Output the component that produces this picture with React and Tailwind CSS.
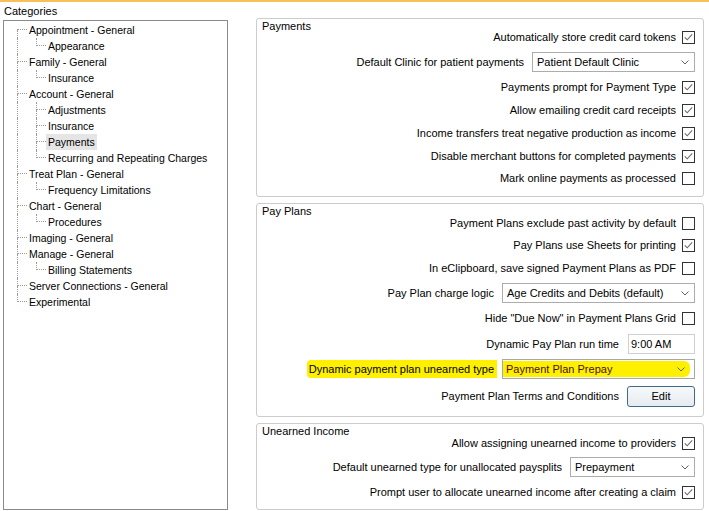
import React from "react";

const tree = [
  { label: "Appointment - General", level: 0 },
  { label: "Appearance", level: 1, last: true },
  { label: "Family - General", level: 0 },
  { label: "Insurance", level: 1, last: true },
  { label: "Account - General", level: 0 },
  { label: "Adjustments", level: 1 },
  { label: "Insurance", level: 1 },
  { label: "Payments", level: 1, selected: true },
  { label: "Recurring and Repeating Charges", level: 1, last: true },
  { label: "Treat Plan - General", level: 0 },
  { label: "Frequency Limitations", level: 1, last: true },
  { label: "Chart - General", level: 0 },
  { label: "Procedures", level: 1, last: true },
  { label: "Imaging - General", level: 0 },
  { label: "Manage - General", level: 0 },
  { label: "Billing Statements", level: 1, last: true },
  { label: "Server Connections - General", level: 0 },
  { label: "Experimental", level: 0 },
];

function Connector({ up, down }) {
  return (
    <div className="w-[10px] shrink-0 flex flex-col">
      <div
        className={`h-[8px] w-[10px] border-b border-dotted border-[#9a9a9a] ${up ? "border-l" : ""}`}
      />
      <div className={`h-[8px] border-dotted border-[#9a9a9a] ${down ? "border-l" : ""}`} />
    </div>
  );
}

function TreeRow({ item, first, lastTop }) {
  return (
    <div className="flex h-[16px] items-stretch">
      <div className="w-[13px] shrink-0" />
      {item.level === 0 ? (
        <>
          <Connector up={!first} down={!lastTop} />
          <div className="w-[2px] shrink-0" />
        </>
      ) : (
        <>
          <div className="w-[19px] shrink-0 border-l border-dotted border-[#9a9a9a]" />
          <Connector up down={!item.last} />
        </>
      )}
      <span
        className={`px-[2px] leading-[16px] whitespace-nowrap ${item.selected ? "bg-[#e5e5e5]" : ""} ${item.level === 0 ? "-ml-[2px]" : ""}`}
      >
        {item.label}
      </span>
    </div>
  );
}

function Check({ checked }) {
  return (
    <svg width="13" height="13" viewBox="0 0 13 13" className="shrink-0">
      <rect x="0.5" y="0.5" width="12" height="12" fill="white" stroke="#333333" />
      {checked && (
        <path d="M2.8 6.3 L5.2 8.8 L10.2 3.4" stroke="#6b6b6b" strokeWidth="1.1" fill="none" />
      )}
    </svg>
  );
}

function Chevron() {
  return (
    <svg width="8" height="5" viewBox="0 0 8 5" className="shrink-0">
      <path d="M0.5 0.5 L4 4 L7.5 0.5" stroke="#606060" fill="none" />
    </svg>
  );
}

function CheckRow({ h, label, checked }) {
  return (
    <div className={`flex items-center justify-end gap-[6px] ${h}`}>
      <span className="whitespace-nowrap">{label}</span>
      <Check checked={checked} />
    </div>
  );
}

function GroupBox({ title, className, children }) {
  return (
    <div className={`border border-[#cccccc] rounded-[3px] pr-[8px] ${className}`}>
      <div className="h-0 pl-[5px] mt-[1px] leading-[13px] whitespace-nowrap">{title}</div>
      {children}
    </div>
  );
}

export default function App() {
  return (
    <div className="w-[709px] h-[511px] overflow-hidden bg-white text-black text-[11px] font-['Liberation_Sans',Arial,sans-serif] border-t-2 border-[#f8c05a]">
      <div className="flex">
        {/* Categories tree */}
        <div className="w-[228px] shrink-0">
          <div className="pl-[4px] mt-[3px] h-[15px] leading-[13px]">Categories</div>
          <div className="ml-[3px] w-[225px] h-[490px] border border-[#8a8a8a] pt-[1px] text-[10.5px]">
            {tree.map((item, i) => (
              <TreeRow key={i} item={item} first={i === 0} lastTop={i === tree.length - 1} />
            ))}
          </div>
        </div>

        {/* Settings */}
        <div className="ml-[28px] w-[448px] pt-[16px] flex flex-col gap-[6px]">
          <GroupBox title="Payments" className="h-[179px]">
            <div className="pt-[6px]">
              <CheckRow h="h-[22px]" label="Automatically store credit card tokens" checked />
              <div className="flex items-center justify-end gap-[8px] h-[28px]">
                <span className="whitespace-nowrap">Default Clinic for patient payments</span>
                <div className="w-[163px] h-[20px] border border-[#acacac] bg-white flex items-center justify-between pl-[4px] pr-[5px]">
                  <span>Patient Default Clinic</span>
                  <Chevron />
                </div>
              </div>
              <CheckRow h="h-[22px]" label="Payments prompt for Payment Type" checked />
              <CheckRow h="h-[24px]" label="Allow emailing credit card receipts" checked />
              <CheckRow h="h-[22px]" label="Income transfers treat negative production as income" checked />
              <CheckRow h="h-[24px]" label="Disable merchant buttons for completed payments" checked />
              <CheckRow h="h-[20px]" label="Mark online payments as processed" />
            </div>
          </GroupBox>

          <GroupBox title="Pay Plans" className="h-[214px]">
            <div className="pt-[7px]">
              <CheckRow h="h-[22px]" label="Payment Plans exclude past activity by default" />
              <CheckRow h="h-[22px]" label="Pay Plans use Sheets for printing" checked />
              <CheckRow h="h-[24px]" label="In eClipboard, save signed Payment Plans as PDF" />
              <div className="flex items-center justify-end gap-[8px] h-[26px]">
                <span className="whitespace-nowrap">Pay Plan charge logic</span>
                <div className="w-[193px] h-[20px] border border-[#acacac] bg-white flex items-center justify-between pl-[4px] pr-[5px]">
                  <span>Age Credits and Debits (default)</span>
                  <Chevron />
                </div>
              </div>
              <CheckRow h="h-[24px]" label={'Hide "Due Now" in Payment Plans Grid'} />
              <div className="flex items-center justify-end gap-[9px] h-[27px]">
                <span className="whitespace-nowrap pt-[2px]">Dynamic Pay Plan run time</span>
                <div className="w-[67px] h-[20px] border border-[#d0d0d0] bg-white pl-[2px] pt-[3px] leading-[12px]">
                  9:00 AM
                </div>
              </div>
              <div className="flex items-center justify-end gap-[5px] h-[24px]">
                <span className="whitespace-nowrap bg-[#fff000] pl-[2px] pr-[3px] py-[1px] rounded-l-[4px]">
                  Dynamic payment plan unearned type
                </span>
                <div className="w-[193px] h-[20px] border border-[#a8a8a8] bg-white flex items-stretch">
                  <div className="flex-1 bg-[#fff000] flex items-center justify-between pl-[3px] pr-[5px] my-[1px] mr-[4px] rounded-r-[6px] text-[#4a0f0f]">
                    <span>Payment Plan Prepay</span>
                    <Chevron />
                  </div>
                </div>
              </div>
              <div className="flex items-center justify-end gap-[8px] h-[30px]">
                <span className="whitespace-nowrap">Payment Plan Terms and Conditions</span>
                <button className="w-[68px] h-[21px] border border-[#3f6a90] rounded-[3px] bg-gradient-to-b from-[#f7f9fb] to-[#e6ebf0] text-[11px] leading-[12px]">
                  Edit
                </button>
              </div>
            </div>
          </GroupBox>

          <GroupBox title="Unearned Income" className="h-[87px]">
            <div className="pt-[7px]">
              <CheckRow h="h-[22px]" label="Allow assigning unearned income to providers" checked />
              <div className="flex items-center justify-end gap-[8px] h-[26px]">
                <span className="whitespace-nowrap">Default unearned type for unallocated paysplits</span>
                <div className="w-[125px] h-[20px] border border-[#acacac] bg-white flex items-center justify-between pl-[4px] pr-[5px]">
                  <span>Prepayment</span>
                  <Chevron />
                </div>
              </div>
              <CheckRow h="h-[24px]" label="Prompt user to allocate unearned income after creating a claim" checked />
            </div>
          </GroupBox>
        </div>
      </div>
    </div>
  );
}
